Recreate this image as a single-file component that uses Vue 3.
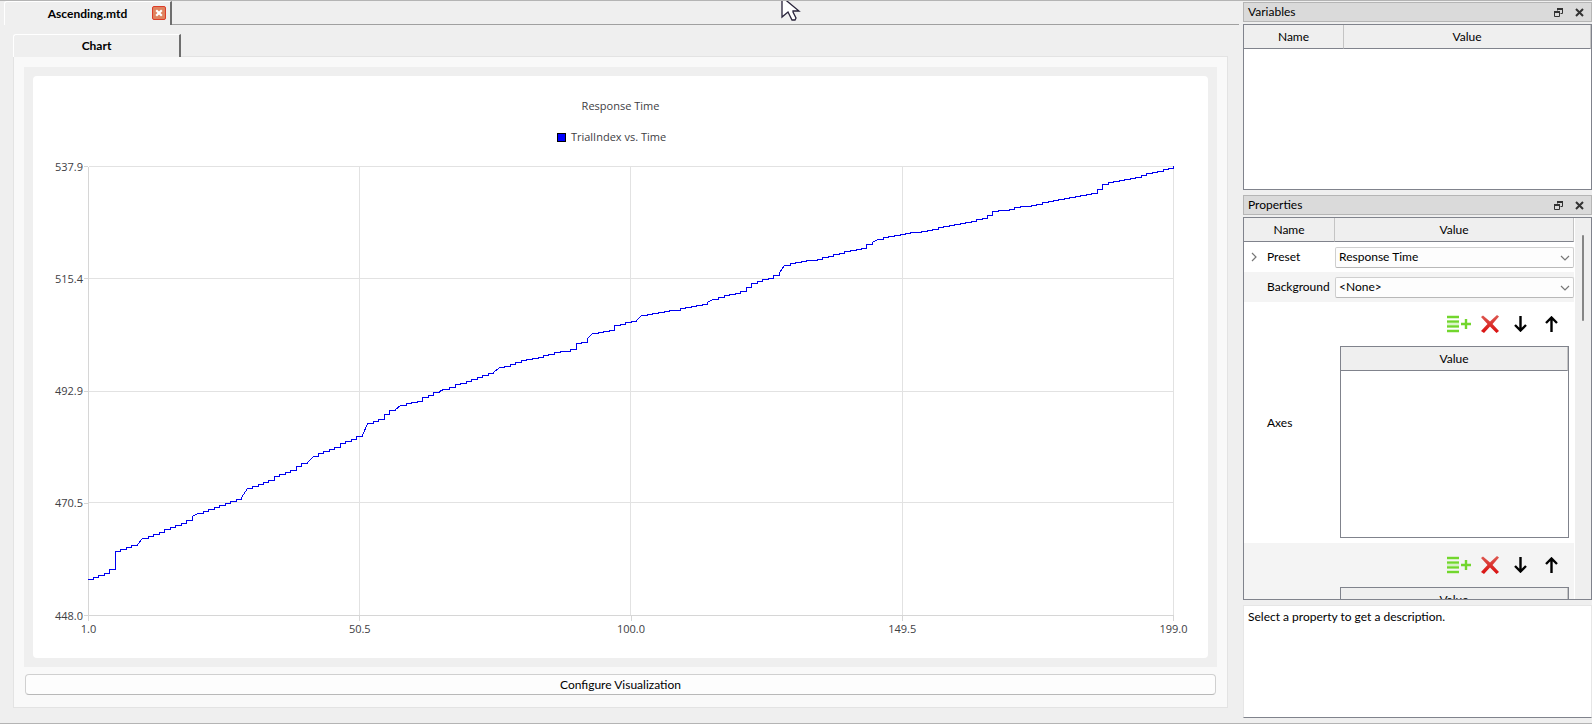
<script setup>
import { ref } from 'vue'

const preset = ref('Response Time')
const background = ref('<None>')
const yTicks = ['537.9', '515.4', '492.9', '470.5', '448.0']
const xTicks = ['1.0', '50.5', '100.0', '149.5', '199.0']
const gridX = [0, 271, 542, 814, 1085]
const gridY = [0, 112, 225, 336, 449]

// Each entry is a step [x, y]; four values describe a sloped rise [x1, y1, x2, y2].
const series = [
  [0, 413], [5, 411], [10, 409], [16, 407], [21, 403], [27, 385], [32, 383], [38, 381], [43, 379],
  [49, 378, 54, 372], [60, 370], [65, 368], [71, 366], [76, 363], [82, 361], [87, 359], [93, 357], [98, 354],
  [104, 350, 109, 347], [115, 345], [120, 343], [126, 341], [131, 339], [137, 337], [142, 335], [148, 333],
  [153, 331, 159, 322], [164, 320], [170, 318], [175, 316], [180, 314], [186, 310], [191, 308], [197, 306],
  [202, 304], [208, 300], [213, 297], [219, 296, 225, 290], [230, 287], [235, 285], [241, 283], [246, 281],
  [252, 277], [257, 275], [263, 273], [268, 270], [274, 269, 279, 257], [285, 255], [290, 253], [296, 248],
  [301, 244], [307, 243, 312, 239], [318, 237], [323, 236], [329, 235], [334, 231], [340, 229], [345, 226],
  [351, 225, 355, 223], [361, 221], [367, 218], [372, 217], [378, 215], [383, 213], [389, 211], [394, 209],
  [400, 207], [405, 206, 411, 201], [416, 200], [422, 198], [427, 196], [433, 194], [438, 193], [444, 192],
  [450, 191], [455, 189], [460, 188], [466, 186], [472, 185], [482, 183], [488, 177], [493, 176],
  [499, 172, 504, 167], [510, 166], [515, 165], [521, 164], [526, 159], [532, 158], [537, 156], [543, 155],
  [548, 154, 553, 149], [559, 148], [564, 147], [570, 146], [576, 145], [581, 144], [592, 142], [597, 141],
  [603, 140], [608, 139], [614, 138], [619, 136, 624, 133], [630, 131], [636, 129], [641, 128], [647, 127],
  [652, 125], [658, 121], [663, 117], [669, 115], [674, 113], [680, 112], [685, 109], [691, 106, 696, 99],
  [702, 97], [707, 96], [713, 95], [718, 94], [729, 93], [734, 91], [740, 90], [745, 88], [751, 87],
  [756, 85], [762, 84], [768, 83], [773, 82], [778, 78], [784, 76, 789, 73], [795, 71], [800, 70], [806, 69],
  [812, 68], [817, 67], [822, 66], [833, 65], [839, 64], [844, 63], [850, 61], [855, 60], [861, 59],
  [866, 58], [872, 57], [877, 56], [883, 55], [888, 53], [894, 52], [899, 49], [904, 45], [910, 44],
  [921, 43], [926, 41], [932, 40], [943, 39], [948, 38], [954, 36], [960, 35], [965, 34], [970, 33],
  [976, 32], [981, 31], [987, 30], [992, 29], [998, 28], [1003, 27], [1009, 23], [1014, 18], [1020, 16],
  [1025, 15], [1031, 14], [1036, 13], [1042, 12], [1047, 11], [1053, 9], [1058, 7], [1064, 6], [1069, 5],
  [1075, 3], [1080, 2], [1085, 0],
]
const linePath = series
  .map(([x, y, x2, y2], i) => {
    const start = i === 0 ? `M${x} ${y}` : `H${x}V${y}`
    return x2 === undefined ? start : `${start}L${x2} ${y2}`
  })
  .join('')

const lists = [
  { label: 'Axes', shaded: false },
  { label: '', shaded: true },
]
</script>

<template>
  <div class="window">
    <svg class="cursor" viewBox="0 0 20 21" aria-hidden="true">
      <path d="M1 -3V17L7 12L8 14L11 20H14L15 18L12 12V11H18Z" fill="#fff" stroke="#28233a" stroke-width="1.3" />
    </svg>

    <main class="workspace">
      <div class="tabs file-tabs">
        <div class="tab">
          <button class="tab-label">Ascending.mtd</button>
          <button class="tab-close" aria-label="Close tab">
            <svg viewBox="0 0 14 14">
              <rect x="0.5" y="0.5" width="13" height="13" rx="1.5" fill="#df8360" stroke="#dc3c28" />
              <path d="M4.2 4.2L9.8 9.8M9.8 4.2L4.2 9.8" stroke="#fff" stroke-width="2.2" />
            </svg>
          </button>
        </div>
      </div>

      <div class="document">
        <div class="tabs inner-tabs">
          <div class="tab"><button class="tab-label">Chart</button></div>
        </div>
        <section class="panel">
          <div class="chart-frame">
            <div class="chart">
              <div class="chart-title">Response Time</div>
              <div class="legend"><span class="swatch"></span>TrialIndex vs. Time</div>
              <div class="plot-row">
                <div class="y-axis">
                  <span v-for="t in yTicks" :key="t"><b>{{ t }}</b><i></i></span>
                </div>
                <svg class="plot" viewBox="0 0 1086 450" preserveAspectRatio="none">
                  <g transform="translate(0.5 0.5)" fill="none" shape-rendering="crispEdges">
                    <path v-for="x in gridX" :key="'x' + x" :d="`M${x} 0V450`" :stroke="x ? '#e2e2e2' : '#d6d6d6'" />
                    <path v-for="y in gridY" :key="'y' + y" :d="`M0 ${y}H1086`" :stroke="y === 449 ? '#d6d6d6' : '#e2e2e2'" />
                    <path :d="linePath" stroke="#0000f0" stroke-linecap="square" />
                  </g>
                </svg>
              </div>
              <div class="x-axis">
                <span v-for="t in xTicks" :key="t"><i></i><b>{{ t }}</b></span>
              </div>
            </div>
          </div>
          <button class="configure">Configure Visualization</button>
        </section>
      </div>
    </main>

    <aside class="sidebar">
      <section class="dock variables">
        <header class="dock-title">
          <h2>Variables</h2>
          <button aria-label="Float Variables">
            <svg viewBox="0 0 9 9"><path d="M3.5 2.5V1H8.5V5.5H6.5" /><path d="M0.5 4V8.5H5.5V4Z" /><path d="M0 4H6M3 1H9" stroke-width="2" /></svg>
          </button>
          <button aria-label="Close Variables">
            <svg viewBox="0 0 9 9"><path d="M1 1L8 8M8 1L1 8" stroke-width="2" /></svg>
          </button>
        </header>
        <div class="box variables-box">
          <table class="grid">
            <colgroup><col class="col-name-wide" /><col /></colgroup>
            <thead><tr><th>Name</th><th>Value</th></tr></thead>
          </table>
        </div>
      </section>

      <section class="dock properties">
        <header class="dock-title">
          <h2>Properties</h2>
          <button aria-label="Float Properties">
            <svg viewBox="0 0 9 9"><path d="M3.5 2.5V1H8.5V5.5H6.5" /><path d="M0.5 4V8.5H5.5V4Z" /><path d="M0 4H6M3 1H9" stroke-width="2" /></svg>
          </button>
          <button aria-label="Close Properties">
            <svg viewBox="0 0 9 9"><path d="M1 1L8 8M8 1L1 8" stroke-width="2" /></svg>
          </button>
        </header>
        <div class="box tree">
          <div class="tree-view">
            <table class="grid">
              <colgroup><col class="col-name" /><col /></colgroup>
              <thead><tr><th>Name</th><th>Value</th></tr></thead>
              <tbody>
                <tr class="field">
                  <td>
                    <div class="name">
                      <button class="expander" aria-label="Expand Preset"><svg viewBox="0 0 6 10"><path d="M1 1L5 5L1 9" /></svg></button>
                      <label for="preset">Preset</label>
                    </div>
                  </td>
                  <td>
                    <div class="select">
                      <select id="preset" v-model="preset"><option>Response Time</option></select>
                      <svg viewBox="0 0 10 6"><path d="M1 1L5 5L9 1" /></svg>
                    </div>
                  </td>
                </tr>
                <tr class="field shaded">
                  <td><div class="name"><span class="expander"></span><label for="background">Background</label></div></td>
                  <td>
                    <div class="select">
                      <select id="background" v-model="background"><option>&lt;None&gt;</option></select>
                      <svg viewBox="0 0 10 6"><path d="M1 1L5 5L9 1" /></svg>
                    </div>
                  </td>
                </tr>
                <tr v-for="(list, i) in lists" :key="i" class="list-row" :class="{ shaded: list.shaded }">
                  <td><div class="name"><span class="expander"></span>{{ list.label }}</div></td>
                  <td>
                    <div class="tools">
                      <button aria-label="Add item">
                        <svg width="24" height="18" viewBox="0 0 24 18">
                          <path d="M0 2H12M0 7H12M0 11H12M0 16H12" stroke="#b9ec98" stroke-width="3" />
                          <path d="M0 2H12M0 6.5H12M0 11.5H12M0 16H12" stroke="#72d62d" stroke-width="2" />
                          <path d="M14 9H24M19 4V14" stroke="#72d62d" stroke-width="2.4" />
                        </svg>
                      </button>
                      <button aria-label="Remove item">
                        <svg width="18" height="18" viewBox="0 0 18 18">
                          <defs><linearGradient :id="'red' + i" x1="0" y1="0" x2="0" y2="1"><stop offset="0" stop-color="#dd5a52" /><stop offset="1" stop-color="#d90e0e" /></linearGradient></defs>
                          <path d="M0 2L2 0.5L9 6.5L16 0L18 1.5L11.5 9L18 16L15.5 18L9 11.5L3 18L0 16L6.5 9Z" :fill="`url(#red${i})`" />
                        </svg>
                      </button>
                      <button aria-label="Move down">
                        <svg width="13" height="16" viewBox="0 0 13 16"><path d="M6.5 0V14.5M1 9L6.5 14.5L12 9" fill="none" stroke="#000" stroke-width="2.4" /></svg>
                      </button>
                      <button aria-label="Move up">
                        <svg width="13" height="16" viewBox="0 0 13 16"><path d="M6.5 16V1.5M1 7L6.5 1.5L12 7" fill="none" stroke="#000" stroke-width="2.4" /></svg>
                      </button>
                    </div>
                    <div class="box value-list">
                      <table class="grid"><thead><tr><th>Value</th></tr></thead></table>
                    </div>
                  </td>
                </tr>
              </tbody>
            </table>
          </div>
          <div class="scrollbar"><span></span></div>
        </div>
      </section>

      <p class="description">Select a property to get a description.</p>
    </aside>
  </div>
</template>

<style>
body {
  margin: 0;
  background: #efefef;
}
</style>

<style scoped>
.window {
  position: relative;
  display: flex;
  gap: 4px;
  box-sizing: border-box;
  height: 100vh;
  min-height: 600px;
  overflow: hidden;
  border-top: 1px solid #b4b4b4;
  border-bottom: 1px solid #b4b4b4;
  background: #efefef;
  color: #000;
  font: 12px/16px Lato, "Open Sans", sans-serif;
}
button {
  padding: 0;
  border: 0;
  background: none;
  color: inherit;
  font: inherit;
}
svg {
  display: block;
}
.cursor {
  position: absolute;
  top: -1px;
  left: 781px;
  z-index: 2;
  width: 20px;
  height: 21px;
}
.workspace {
  display: flex;
  flex: 1;
  flex-direction: column;
  min-width: 0;
}
.tabs {
  display: flex;
}
.tabs::after {
  content: "";
  flex: 1;
  border-bottom: 1px solid #a0a0a0;
}
.tab {
  display: flex;
  align-items: center;
  box-sizing: border-box;
  width: 168px;
  border-top: 1px solid #fff;
  border-left: 1px solid #fff;
  border-right: 2px solid #6e6e6e;
  border-radius: 3px 0 0 0;
}
.tab-label {
  flex: 1;
  font-weight: bold;
}
.file-tabs {
  height: 24px;
  padding-left: 4px;
}
.file-tabs .tab-label {
  padding-left: 18px;
}
.tab-close {
  width: 14px;
  height: 14px;
  margin: 0 4px 2px 0;
}
.document {
  display: flex;
  flex: 1;
  flex-direction: column;
  min-height: 0;
  margin: 9px 11px 15px 13px;
}
.inner-tabs {
  height: 23px;
}
.inner-tabs::after {
  border-color: #e3e3e3;
}
.panel {
  display: flex;
  flex: 1;
  flex-direction: column;
  min-height: 0;
  padding: 10px;
  border: 1px solid #e3e3e3;
  border-top: 0;
  background: #f9f9f9;
}
.chart-frame {
  display: flex;
  flex: 1;
  min-height: 0;
  padding: 9px;
  background: #efefef;
}
.chart {
  display: flex;
  flex: 1;
  flex-direction: column;
  min-width: 0;
  padding: 15px 34px 20px 16px;
  border-radius: 4px;
  background: #fff;
  color: #404044;
  font: 11px/16px "Open Sans", sans-serif;
}
.chart-title,
.legend {
  display: flex;
  align-items: center;
  justify-content: center;
  height: 30px;
}
.chart-title {
  margin-right: -18px;
}
.legend {
  gap: 5px;
  padding-top: 1px;
}
.swatch {
  width: 7px;
  height: 7px;
  border: 1px solid #000;
  background: #00f;
}
.plot-row {
  display: flex;
  flex: 1;
  min-height: 0;
  margin-top: 14px;
}
.y-axis {
  display: flex;
  flex-direction: column;
  justify-content: space-between;
  width: 39px;
}
.y-axis span {
  display: flex;
  align-items: center;
  justify-content: flex-end;
  gap: 1px;
  height: 1px;
}
.y-axis i {
  width: 4px;
  height: 1px;
  background: #d6d6d6;
}
.y-axis b,
.x-axis b {
  font-weight: normal;
}
.plot {
  flex: 1;
  min-width: 0;
  height: 100%;
}
.x-axis {
  display: flex;
  justify-content: space-between;
  height: 22px;
  margin-left: 39px;
}
.x-axis span {
  display: flex;
  flex-direction: column;
  align-items: center;
  width: 1px;
  white-space: nowrap;
}
.x-axis i {
  flex: none;
  width: 1px;
  height: 5px;
  background: #d6d6d6;
}
.configure {
  height: 21px;
  margin: 7px 1px 2px 1px;
  border: 1px solid #d0d0d0;
  border-bottom-color: #b8b8b8;
  border-radius: 4px;
  background: #fdfdfd;
}
.sidebar {
  display: flex;
  flex: 0 0 349px;
  flex-direction: column;
  min-height: 0;
  padding: 1px 0 5px;
}
.dock {
  display: flex;
  flex-direction: column;
  gap: 2px;
}
.dock-title {
  display: flex;
  align-items: center;
  gap: 12px;
  box-sizing: border-box;
  height: 20px;
  padding: 0 7px 0 4px;
  border: 1px solid #b5b5b5;
  background: #dadada;
}
.dock-title h2 {
  flex: 1;
  margin: 0;
  font: inherit;
}
.dock-title svg {
  width: 9px;
  height: 9px;
  fill: none;
  stroke: #333;
}
.box {
  box-sizing: border-box;
  border: 1px solid #80838c;
  background: #fff;
}
.variables-box {
  height: 166px;
}
.properties {
  flex: 1;
  min-height: 0;
  margin-top: 5px;
}
.grid {
  width: 100%;
  border-spacing: 0;
  table-layout: fixed;
}
.col-name-wide {
  width: 100px;
}
.col-name {
  width: 91px;
}
th {
  box-sizing: border-box;
  height: 24px;
  padding: 0;
  border-right: 1px solid #c4c4c4;
  border-bottom: 1px solid #80838c;
  background: #efefef;
  font-weight: normal;
}
td {
  padding: 0;
}
.tree {
  display: flex;
  flex: 1;
  min-height: 0;
}
.tree-view {
  flex: 1;
  min-width: 0;
  overflow: hidden;
}
.scrollbar {
  display: flex;
  justify-content: center;
  width: 16px;
  margin-left: 1px;
  padding-top: 17px;
  background: #efefef;
}
.scrollbar span {
  width: 2px;
  height: 86px;
  border-radius: 1px;
  background: #858585;
}
.field {
  height: 30px;
}
.shaded {
  background: #f4f4f4;
}
.name {
  display: flex;
  align-items: center;
}
.expander {
  display: flex;
  align-items: center;
  justify-content: center;
  width: 20px;
  height: 16px;
  margin-right: 3px;
}
.expander svg {
  width: 6px;
  height: 10px;
}
.expander path,
.select path {
  fill: none;
  stroke: #777;
  stroke-width: 1.2;
}
.select {
  position: relative;
}
.select select {
  display: block;
  box-sizing: border-box;
  width: 100%;
  height: 21px;
  padding: 0 20px 0 3px;
  border: 1px solid #cfcfcf;
  border-bottom-color: #b8b8b8;
  border-radius: 2px;
  appearance: none;
  background: #fdfdfd;
  color: #000;
  font: inherit;
}
.select svg {
  position: absolute;
  top: 8px;
  right: 4px;
  width: 10px;
  height: 6px;
  pointer-events: none;
}
.list-row td {
  height: 241px;
}
.tools {
  display: flex;
  align-items: center;
  justify-content: flex-end;
  height: 44px;
  padding: 0 7px 0 0;
}
.tools button {
  display: flex;
  align-items: center;
  justify-content: center;
  width: 31px;
  height: 24px;
}
.value-list {
  height: 192px;
  margin: 0 5px 5px;
}
.description {
  box-sizing: border-box;
  height: 113px;
  margin: 5px 0 0;
  padding: 3px 4px;
  border: 1px solid #e6e6e6;
  border-bottom-color: #80838c;
  background: #fff;
}
</style>
